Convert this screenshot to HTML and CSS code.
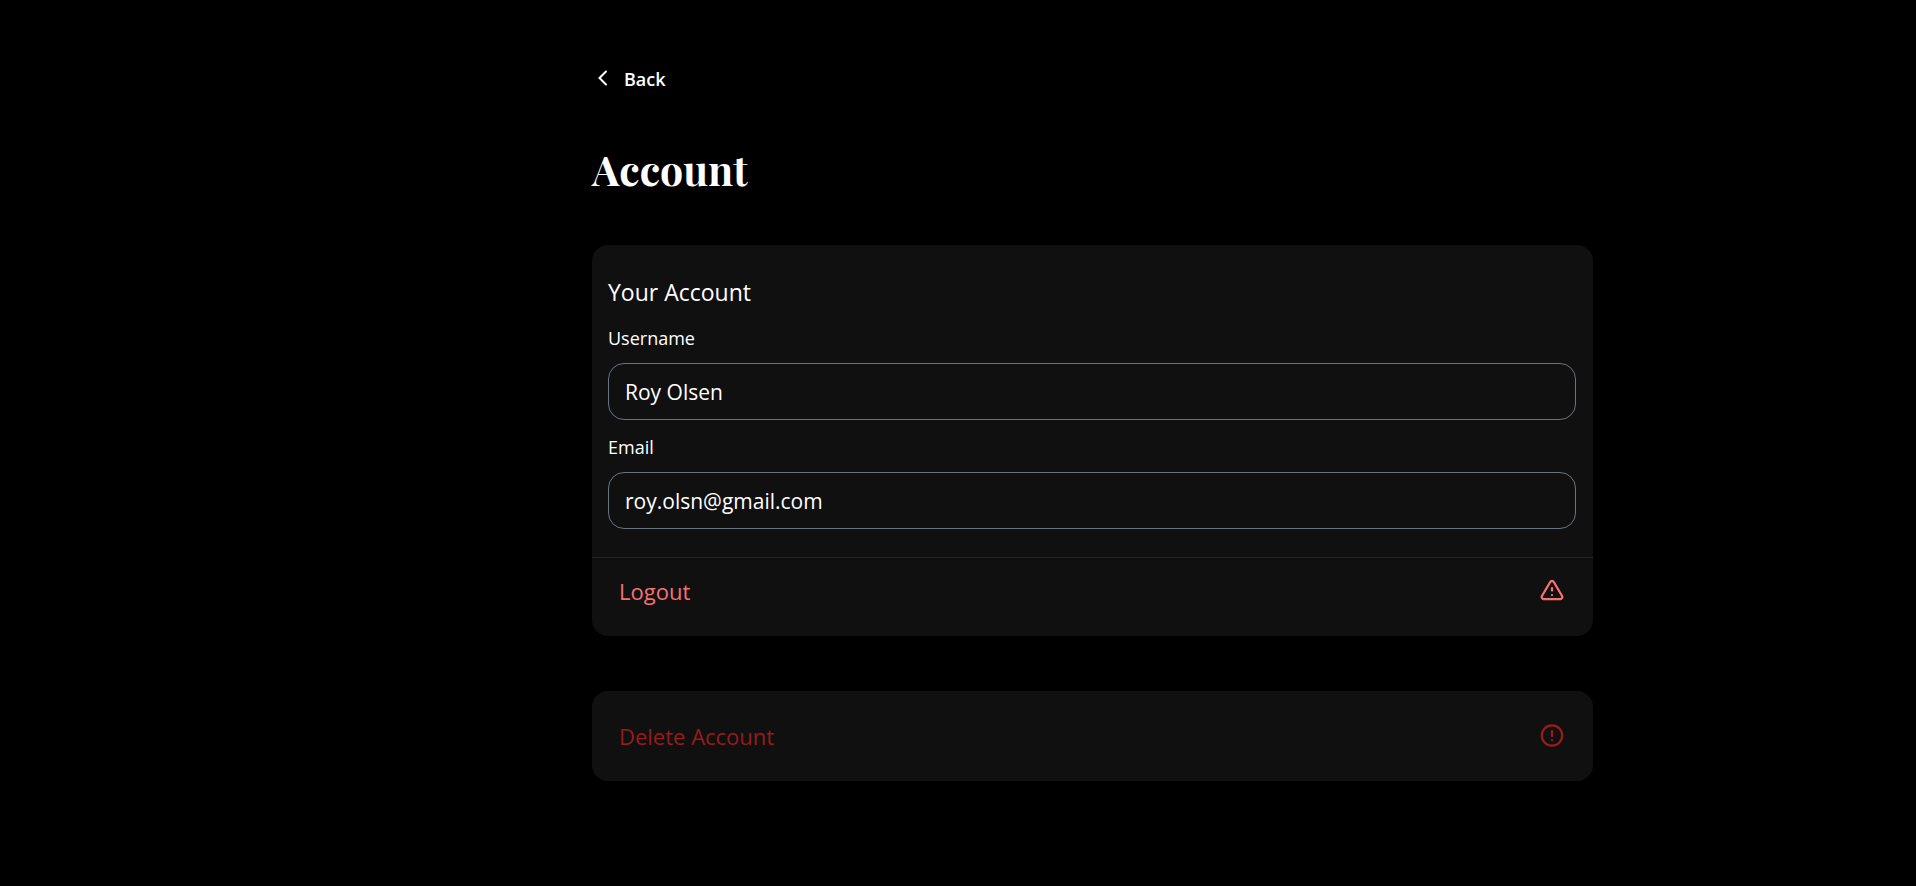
FILE: index.html
```html
<!DOCTYPE html>
<html lang="en">
<head>
<meta charset="utf-8">
<meta name="viewport" content="width=device-width, initial-scale=1">
<title>Account</title>
<link rel="stylesheet" href="styles.css">
</head>
<body>
<div class="layout">
  <main class="page">
    <a class="back" href="#">
      <svg class="back-icon" viewBox="0 0 20 20" aria-hidden="true"><path d="M14 2.500 7.500 9l6.500 6.500"/></svg>
      <span>Back</span>
    </a>
    <h1 class="title">Account</h1>
    <section class="card">
      <form class="profile">
        <h2 class="heading">Your Account</h2>
        <label class="label" for="username">Username</label>
        <input class="field" id="username" type="text" value="Roy Olsen">
        <label class="label" for="email">Email</label>
        <input class="field" id="email" type="email" value="roy.olsn@gmail.com">
      </form>
      <button class="action logout" type="button">
        <span>Logout</span>
        <svg class="icon" viewBox="0 0 24 24" aria-hidden="true"><path d="M10.240 3 1.900 17a2 2 0 0 0 1.730 3h16.740a2 2 0 0 0 1.730-3L13.760 3a2 2 0 0 0-3.520 0Z"/><path d="M12 9v2.500M12 16v.01"/></svg>
      </button>
    </section>
    <section class="card">
      <button class="action delete" type="button">
        <span>Delete Account</span>
        <svg class="icon" viewBox="0 0 24 24" aria-hidden="true"><circle cx="12" cy="11.500" r="10.200"/><path d="M12 7v5M12 16v.01"/></svg>
      </button>
    </section>
  </main>
</div>
</body>
</html>
```
FILE: styles.css
```css
* {
  box-sizing: border-box;
}

body {
  margin: 0;
  min-height: 100vh;
  background: #000;
  color: #fff;
  font-family: "Segoe UI", "Open Sans", "Noto Sans", sans-serif;
}

.layout {
  display: flex;
  justify-content: center;
  padding: 63px 0 64px 269px;
}

.page {
  width: 100%;
  max-width: 1001px;
}

.back {
  display: inline-flex;
  align-items: center;
  gap: 12px;
  color: #fff;
  font-size: 18px;
  font-weight: 600;
  line-height: 32px;
  text-decoration: none;
}

.back-icon {
  width: 20px;
  height: 20px;
  fill: none;
  stroke: currentColor;
  stroke-width: 2;
  stroke-linecap: round;
}

.title {
  margin: 40px 0 42px;
  font-family: "Playfair Display", "Liberation Serif", serif;
  font-size: 41px;
  font-weight: 700;
  line-height: 68px;
}

.card {
  margin-bottom: 55px;
  padding-bottom: 11px;
  border-radius: 16px;
  background: #101010;
}

.profile {
  display: flex;
  flex-direction: column;
  padding: 27px 17px 28px 16px;
}

.heading {
  margin: 0 0 12px;
  font-size: 23px;
  font-weight: 400;
  line-height: 40px;
}

.label {
  font-size: 18px;
  line-height: 28px;
  margin-bottom: 11px;
}

.field {
  width: 100%;
  height: 57px;
  margin-bottom: 13px;
  padding: 0 16px;
  border: 1px solid #6b7280;
  border-radius: 16px;
  background: transparent;
  color: #fff;
  font: inherit;
  font-size: 21px;
}

.field:last-child {
  margin-bottom: 0;
}

.action {
  display: flex;
  align-items: center;
  justify-content: space-between;
  width: 100%;
  padding: 15px 29px 16px 27px;
  border: 0;
  background: transparent;
  font: inherit;
  font-size: 22px;
  line-height: 36px;
  cursor: pointer;
}

.logout {
  border-top: 1px solid #262626;
  color: #f87171;
}

.delete {
  padding-top: 27px;
  color: #991b1b;
}

.icon {
  width: 24px;
  height: 24px;
  fill: none;
  stroke: currentColor;
  stroke-width: 2.250;
  stroke-linecap: round;
  stroke-linejoin: round;
}
```
